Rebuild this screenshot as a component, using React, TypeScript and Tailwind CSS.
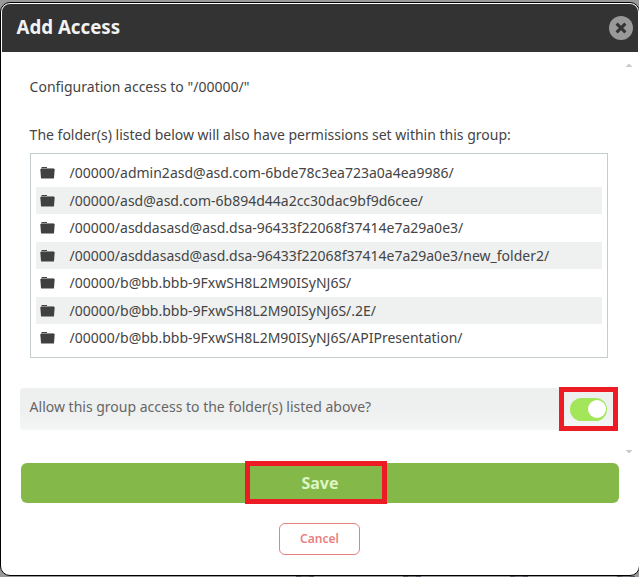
import React from 'react';

interface FolderRowProps {
  path: string;
  striped: boolean;
}

const folders: string[] = [
  '/00000/admin2asd@asd.com-6bde78c3ea723a0a4ea9986/',
  '/00000/asd@asd.com-6b894d44a2cc30dac9bf9d6cee/',
  '/00000/asddasasd@asd.dsa-96433f22068f37414e7a29a0e3/',
  '/00000/asddasasd@asd.dsa-96433f22068f37414e7a29a0e3/new_folder2/',
  '/00000/b@bb.bbb-9FxwSH8L2M90ISyNJ6S/',
  '/00000/b@bb.bbb-9FxwSH8L2M90ISyNJ6S/.2E/',
  '/00000/b@bb.bbb-9FxwSH8L2M90ISyNJ6S/APIPresentation/',
];

const FolderIcon: React.FC = () => (
  <svg className="h-3 w-[15px] shrink-0" viewBox="0 0 15 12">
    <path d="M1.5 0 H7 V1 H13.5 V2 H1.5 Z" fill="#444444" />
    <path d="M7 1 H14 V2 H1 V1 Z" fill="#8f8f8f" />
    <path d="M0.3 2 H14.7 L14 11 Q14 11.5 13.4 11.5 H1.6 Q1 11.5 1 11 Z" fill="#404040" />
  </svg>
);

const FolderRow: React.FC<FolderRowProps> = ({ path, striped }) => (
  <li
    className={`flex h-[27.5px] items-center pl-1 ${striped ? 'bg-[#eff1f1] pt-px' : ''}`}
  >
    <FolderIcon />
    <span className="ml-[14.6px] whitespace-nowrap">{path}</span>
  </li>
);

const App: React.FC = () => {
  return (
    <div className="h-[577px] w-[639px] overflow-hidden bg-[#999999] pt-0.5 font-['Noto_Sans',sans-serif] text-sm text-[#444444]">
      <section className="flex h-[574px] w-[640px] flex-col rounded-[10px] border border-black bg-white p-px">
        <header className="flex h-12 shrink-0 items-center justify-between rounded-t-lg bg-[#333333] pr-[5px] pl-[14.5px]">
          <h1 className="-mt-0.5 text-[18.7px] font-bold text-[#f2f2f2]">Add Access</h1>
          <button type="button" aria-label="Close">
            <svg className="size-6" viewBox="0 0 24 24">
              <circle cx="12" cy="12" r="12" fill="#999999" />
              <path d="M7.6 7.6 L16.4 16.4 M16.4 7.6 L7.6 16.4" stroke="#333333" strokeWidth="3" />
            </svg>
          </button>
        </header>

        <div className="flex h-[402px] shrink-0 pl-[18px]">
          <div className="w-[598px]">
            <div className="pt-[25px] pl-[10px]">
              <p className="-ml-[0.4px] h-5 leading-5">Configuration access to "/00000/"</p>
              <p className="mt-7 -ml-[0.4px] h-5 leading-5">
                The folder(s) listed below will also have permissions set within this group:
              </p>
              <ul className="mt-2 h-[205px] w-[578px] border border-[#c5cdd0] p-[5px]">
                {folders.map((path, index) => (
                  <FolderRow key={path} path={path} striped={index % 2 === 1} />
                ))}
              </ul>
            </div>

            <div className="mt-[30px] flex h-[42px] items-center justify-between rounded bg-linear-to-b from-[#eef0f0] from-50% to-[#f4f6f6] pl-[9.6px]">
              <span className="-mt-1 text-[#666666]">
                Allow this group access to the folder(s) listed above?
              </span>
              <div className="flex h-11 w-[59px] shrink-0 items-center justify-center border-5 border-[#ed1c24]">
                <button
                  type="button"
                  role="switch"
                  aria-checked="true"
                  className="flex h-[23px] w-[37px] items-center justify-end rounded-full bg-[#a3e65a] pr-[1.5px]"
                >
                  <span className="size-[18px] rounded-full bg-white" />
                </button>
              </div>
            </div>
          </div>

          <div className="ml-2 flex w-1.5 flex-col justify-between pt-3 pb-px">
            <svg className="h-[3px] w-1.5" viewBox="0 0 6 3" shapeRendering="crispEdges">
              <path d="M2 0 H4 V1 H5 V2 H6 V3 H0 V2 H1 V1 H2 Z" fill="#cccccc" />
            </svg>
            <svg className="h-[3px] w-1.5" viewBox="0 0 6 3" shapeRendering="crispEdges">
              <path d="M0 0 H6 V1 H5 V2 H4 V3 H2 V2 H1 V1 H0 Z" fill="#cccccc" />
            </svg>
          </div>
        </div>

        <footer className="flex flex-col items-center">
          <button
            type="button"
            className="relative mt-[9px] flex h-10 w-[598px] items-center justify-center rounded-md bg-[#84b94a] text-base font-bold text-[#def5c4]"
          >
            Save
            <span className="absolute -top-0.5 left-56 h-[43px] w-[142px] border-5 border-[#ed1c24]" />
          </button>
          <button
            type="button"
            className="mt-5 mr-px h-8 w-[81px] rounded-md border border-[#e88080] text-xs font-semibold text-[#e88080]"
          >
            Cancel
          </button>
        </footer>
      </section>

      {/* top edge of the page content behind the dialog */}
      <div className="flex h-px gap-[89px] pl-[296px]">
        <span className="w-[18px] border-x-5 border-[#555566] bg-[#777777]" />
        <span className="w-[18px] border-x-5 border-[#555566] bg-[#777777]" />
        <span className="w-[18px] border-x-5 border-[#555566] bg-[#777777]" />
        <span className="w-[18px] border-x-5 border-[#555566] bg-[#777777]" />
      </div>
    </div>
  );
};

export default App;
